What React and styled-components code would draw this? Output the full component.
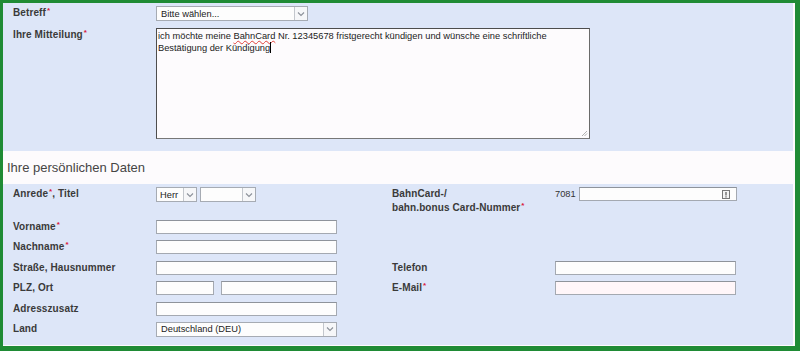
import React from "react";
import styled, { createGlobalStyle } from "styled-components";

const Global = createGlobalStyle`
  html, body { margin: 0; padding: 0; background: #fff; }
  body { font-family: "Liberation Sans", Arial, sans-serif; }
  * { box-sizing: border-box; }
`;

const Frame = styled.div`
  width: 800px;
  height: 351px;
  border-style: solid;
  border-color: #1f8b35;
  border-width: 3px 5px 5px 3px;
  background: #fdfbfd;
  padding: 0 2px 1px 0;
  display: flex;
  flex-direction: column;
`;

const Section = styled.div`
  background: #dde6f8;
  padding: ${(p) => p.$pad};
  display: grid;
  grid-template-columns: ${(p) => p.$cols};
  grid-template-rows: ${(p) => p.$rows || "auto"};
  row-gap: ${(p) => p.$gap || "6px"};
  align-content: start;
  flex: ${(p) => (p.$grow ? 1 : "none")};
`;

const Label = styled.div`
  font-size: 10px;
  font-weight: bold;
  color: #3a3a3a;
  line-height: 14px;
  padding-top: ${(p) => p.$pt || "0px"};
  letter-spacing: 0.1px;
`;

const Req = styled.span`
  color: #d8183c;
  font-size: 8px;
  vertical-align: top;
  line-height: 10px;
  margin-left: 1px;
`;

const Header = styled.div`
  height: 33px;
  display: flex;
  align-items: center;
  padding-left: 4px;
  font-size: 13px;
  color: #454545;
  background: #fdfbfd;
`;

const Field = styled.div`
  display: flex;
  align-items: flex-start;
  gap: ${(p) => p.$gap || "3px"};
`;

const Input = styled.div`
  width: ${(p) => p.$w}px;
  height: ${(p) => p.$h || 14}px;
  border: 1px solid #a4a9b1;
  border-top-color: #8e939b;
  background: ${(p) => p.$bg || "#fdfdfd"};
  position: relative;
`;

const SelectBox = styled.div`
  width: ${(p) => p.$w}px;
  height: 15px;
  border: 1px solid #a6abb3;
  background: #fdfdfd;
  display: flex;
  align-items: center;
  font-size: 9.3px;
  color: #222;
  padding-left: ${(p) => p.$pl || 4}px;
`;

const SelText = styled.span`
  flex: 1;
  white-space: nowrap;
  overflow: hidden;
`;

const ArrowBtn = styled.span`
  width: 13px;
  height: 13px;
  border-left: 1px solid #c3c7cd;
  display: flex;
  align-items: center;
  justify-content: center;
  background: #f6f7f9;
`;

const Plain = styled.span`
  font-size: 9.3px;
  color: #333;
  line-height: 14px;
`;

const TextArea = styled.div`
  width: 434px;
  height: 111px;
  border: 1px solid #4d4d4d;
  border-right-color: #6a6a6a;
  border-bottom-color: #777;
  background: #fdfbfd;
  padding: 1px 1px;
  font-size: 9.3px;
  line-height: 12px;
  color: #222;
  position: relative;
`;

const Spell = styled.span`
  text-decoration: underline wavy #e0403a;
  text-decoration-thickness: 1px;
  text-underline-offset: 1px;
`;

const Caret = styled.span`
  display: inline-block;
  width: 1px;
  height: 11px;
  background: #000;
  vertical-align: -2px;
`;

const Grip = styled.svg`
  position: absolute;
  right: 1px;
  bottom: 1px;
`;

const CardIcon = styled.svg`
  position: absolute;
  right: 6px;
  top: 2px;
`;

const Chevron = () => (
  <svg width="8" height="6" viewBox="0 0 8 6">
    <path d="M1 1.5 L4 4.5 L7 1.5" fill="none" stroke="#8b9099" strokeWidth="1.1" />
  </svg>
);

const Select = ({ w, children, pl }) => (
  <SelectBox $w={w} $pl={pl}>
    <SelText>{children}</SelText>
    <ArrowBtn>
      <Chevron />
    </ArrowBtn>
  </SelectBox>
);

const Empty = styled.div``;

export default function App() {
  return (
    <>
      <Global />
      <Frame>
        <Section $pad="3px 0 12px 10px" $cols="143px 1fr" $gap="7px">
          <Label $pt="0px">
            Betreff<Req>*</Req>
          </Label>
          <Field>
            <Select w={152}>Bitte wählen...</Select>
          </Field>
          <Label $pt="0px">
            Ihre Mitteilung<Req>*</Req>
          </Label>
          <Field>
            <TextArea>
              ich möchte meine <Spell>BahnCard</Spell> Nr. 12345678 fristgerecht kündigen und wünsche eine
              schriftliche Bestätigung der Kündigung
              <Caret />
              <Grip width="7" height="7" viewBox="0 0 7 7">
                <path d="M6 1 L1 6 M6 3.5 L3.5 6" stroke="#b0b0b0" strokeWidth="1" />
              </Grip>
            </TextArea>
          </Field>
        </Section>

        <Header>Ihre persönlichen Daten</Header>

        <Section
          $grow
          $pad="3px 0 8px 10px"
          $cols="143px 236px 163px 1fr"
          $rows="27px repeat(5, 14.4px) 15px"
          $gap="6px"
        >
          <Label>
            Anrede<Req>*</Req>, Titel
          </Label>
          <Field>
            <Select w={41} pl={3}>Herr</Select>
            <Select w={56}></Select>
          </Field>
          <Label>
            BahnCard-/
            <br />
            bahn.bonus Card-Nummer<Req>*</Req>
          </Label>
          <Field $gap="3px">
            <Plain>7081</Plain>
            <Input $w={158}>
              <CardIcon width="8" height="9" viewBox="0 0 8 9">
                <rect x="0.5" y="0.5" width="7" height="8" fill="#f4f4f4" stroke="#777" />
                <path d="M4 2 V5.5" stroke="#555" strokeWidth="1.2" />
                <rect x="3.4" y="6.3" width="1.2" height="1.2" fill="#555" />
              </CardIcon>
            </Input>
          </Field>

          <Label>
            Vorname<Req>*</Req>
          </Label>
          <Field>
            <Input $w={181} />
          </Field>
          <Empty />
          <Empty />

          <Label>
            Nachname<Req>*</Req>
          </Label>
          <Field>
            <Input $w={181} />
          </Field>
          <Empty />
          <Empty />

          <Label>Straße, Hausnummer</Label>
          <Field>
            <Input $w={181} />
          </Field>
          <Label>Telefon</Label>
          <Field>
            <Input $w={181} />
          </Field>

          <Label>PLZ, Ort</Label>
          <Field $gap="7px">
            <Input $w={58} />
            <Input $w={116} />
          </Field>
          <Label>
            E-Mail<Req>*</Req>
          </Label>
          <Field>
            <Input $w={181} $bg="#fff6f9" />
          </Field>

          <Label>Adresszusatz</Label>
          <Field>
            <Input $w={181} />
          </Field>
          <Empty />
          <Empty />

          <Label>Land</Label>
          <Field>
            <Select w={181}>Deutschland (DEU)</Select>
          </Field>
          <Empty />
          <Empty />
        </Section>
      </Frame>
    </>
  );
}
